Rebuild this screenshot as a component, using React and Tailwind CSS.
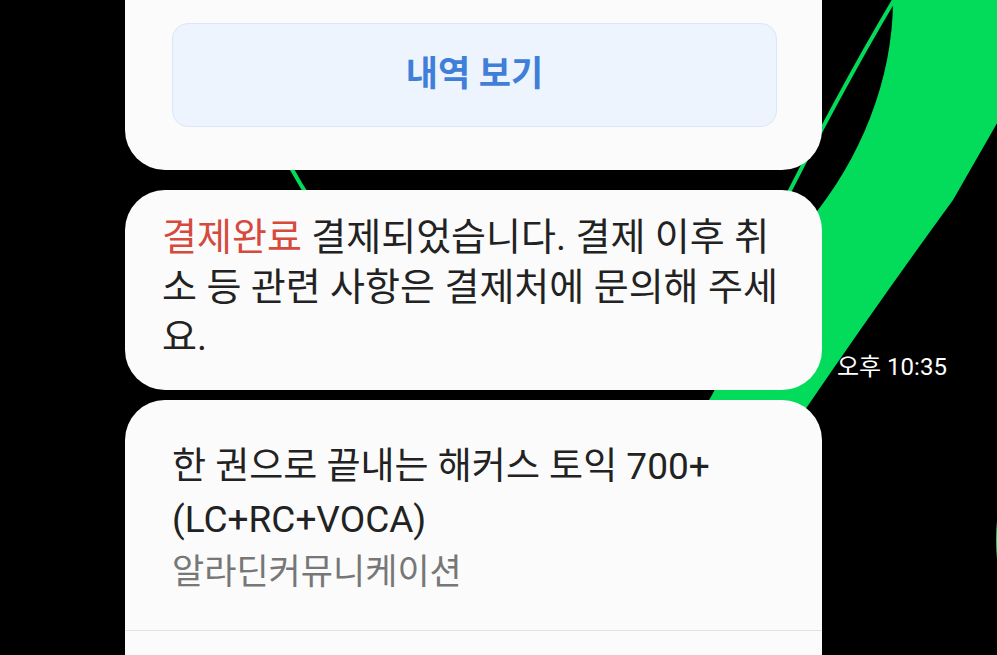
import React from 'react'

function Wallpaper(){
  return (
    <svg className="absolute inset-0" width="997" height="655" viewBox="0 0 997 655">
      <path d="M893 0 L1000 0 L1000 118 L953 200 Q880 300 807 407 L640 655 L560 655 L712 395 Q760 300 810 220 C860 160 893 80 893 0 Z" fill="#03dc5a" />
      <path d="M897 -5 Q840 90 770 230" stroke="#03dc5a" strokeWidth="4" fill="none" />
      <path d="M220 -5 Q250 110 320 215" stroke="#03dc5a" strokeWidth="4" fill="none" />
      <path d="M1012 470 Q986 540 1012 610" stroke="#03dc5a" strokeWidth="6" fill="none" />
    </svg>
  )
}

export default function App(){
  return (
    <div className="relative h-[655px] w-[997px] overflow-hidden bg-black font-['Roboto','Noto_Sans_CJK_KR',sans-serif]">
      <Wallpaper />
      <div className="relative flex flex-col pl-[125px]">
        {/* card with button, top cut off */}
        <div className="-mt-[50px] w-[697px] rounded-[40px] bg-[#fbfbfb] pl-[47px] pr-[45px] pt-[73px] pb-[43px]">
          <button className="flex h-[104px] w-full items-center justify-center rounded-[16px] border border-[#dbe6f6] bg-[#eef4fd] text-[35px] font-semibold text-[#3f7fd9]">
            내역 보기
          </button>
        </div>

        <div className="mt-[20px] flex items-end">
          <div className="w-[697px] rounded-[40px] bg-[#fbfbfb] pl-[37px] pr-[30px] pt-[22px] pb-[28px] text-[38px] leading-[50px] text-[#222] whitespace-nowrap">
            <p><span className="text-[#d64a3e]">결제완료</span> 결제되었습니다. 결제 이후 취</p>
            <p>소 등 관련 사항은 결제처에 문의해 주세</p>
            <p>요.</p>
          </div>
          <span className="mb-[9px] ml-[15px] text-[24px] leading-[28px] text-white whitespace-nowrap">오후 10:35</span>
        </div>

        <div className="mt-[10px] w-[697px] rounded-t-[40px] bg-[#fbfbfb]">
          <div className="px-[47px] pt-[40px] pb-[30px] whitespace-nowrap">
            <p className="text-[37px] leading-[53px] text-[#222]">한 권으로 끝내는 해커스 토익 700+</p>
            <p className="text-[37px] leading-[53px] text-[#222]">(LC+RC+VOCA)</p>
            <p className="text-[35px] leading-[54px] text-[#777]">알라딘커뮤니케이션</p>
          </div>
          <div className="h-[60px] border-t border-[#e2e2e2]" />
        </div>
      </div>
    </div>
  )
}
